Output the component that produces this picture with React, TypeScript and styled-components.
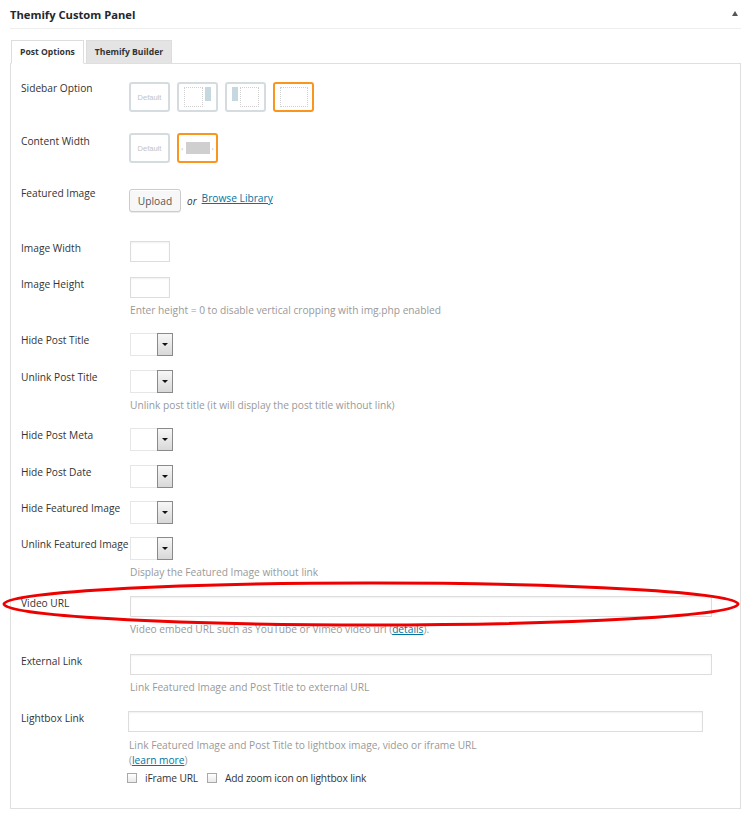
import React from "react";
import styled, { createGlobalStyle } from "styled-components";

const Global = createGlobalStyle`
  html, body { margin: 0; padding: 0; background: #fff; }
  body { font-family: "Open Sans", "DejaVu Sans", sans-serif; color: #333; }
`;

const Page = styled.div`
  position: relative;
  width: 750px;
  padding: 0 9px 0 10px;
  box-sizing: border-box;
`;

const Header = styled.div`
  display: flex;
  align-items: center;
  justify-content: space-between;
  height: 28px;
  border-bottom: 1px solid #eeeeee;
`;

const Title = styled.h2`
  margin: 0;
  font-size: 11.2px;
  font-weight: 700;
  color: #23282d;
`;

const Toggle = styled.span`
  width: 0;
  height: 0;
  margin-right: 3px;
  margin-top: -2px;
  border-left: 3px solid transparent;
  border-right: 3px solid transparent;
  border-bottom: 5px solid #555;
`;

const Tabs = styled.div`
  display: flex;
  gap: 2px;
  margin-top: 11px;
  padding-left: 1px;
  position: relative;
  z-index: 1;
`;

const Tab = styled.div<{ $active?: boolean }>`
  box-sizing: border-box;
  height: ${(p) => (p.$active ? 24 : 23)}px;
  margin-bottom: ${(p) => (p.$active ? -1 : 0)}px;
  padding: 0 8px;
  display: flex;
  align-items: center;
  font-size: 8.6px;
  font-weight: 700;
  color: #333;
  border: 1px solid #dddddd;
  border-bottom: ${(p) => (p.$active ? "1px solid #fff" : "none")};
  background: ${(p) => (p.$active ? "#fff" : "#e4e4e4")};
`;

const Box = styled.div`
  border: 1px solid #dfdfdf;
  padding: 18px 0 23px 10px;
  display: flex;
  flex-direction: column;
`;

const Row = styled.div<{ $top?: number }>`
  display: grid;
  grid-template-columns: 108px 1fr;
  margin-top: ${(p) => p.$top ?? 0}px;
`;

const Label = styled.div<{ $lift?: number }>`
  font-size: 10.2px;
  line-height: 16px;
  margin-top: ${(p) => -1 - (p.$lift ?? 0)}px;
  color: #333;
  white-space: nowrap;
`;

const Control = styled.div<{ $shift?: number }>`
  display: flex;
  flex-direction: column;
  align-items: flex-start;
  margin-left: ${(p) => p.$shift ?? 0}px;
`;

const Options = styled.div`
  display: flex;
  gap: 7px;
`;

const OptBox = styled.div<{ $selected?: boolean }>`
  box-sizing: border-box;
  width: 41px;
  height: 30px;
  border: 2px solid ${(p) => (p.$selected ? "#f8961f" : "#d5dcdf")};
  border-radius: 3px;
  display: flex;
  align-items: center;
  justify-content: center;
  gap: 2px;
  background: #fff;
`;

const DefaultText = styled.span`
  font-family: "Liberation Sans", Arial, sans-serif;
  font-size: 7.5px;
  color: #c3c3c3;
`;

const Dotted = styled.span<{ $w: number }>`
  box-sizing: border-box;
  width: ${(p) => p.$w}px;
  height: 20px;
  border: 1px dotted #d0d0d0;
`;

const Bar = styled.span`
  width: 6px;
  height: 14px;
  align-self: flex-start;
  margin-top: 3px;
  background: #c6d8df;
`;

const Chevron = styled.span`
  font-family: "DejaVu Sans", sans-serif;
  font-size: 6px;
  color: #999;
`;

const GrayBlock = styled.span`
  width: 24px;
  height: 12px;
  background: #cfcfcf;
`;

const Inline = styled.div`
  display: flex;
  align-items: center;
  gap: 5px;
`;

const Button = styled.button`
  box-sizing: border-box;
  width: 52px;
  height: 23px;
  padding: 0;
  border: 1px solid #cccccc;
  border-radius: 3px;
  background: #f7f7f7;
  box-shadow: inset 0 1px 0 #fff, 0 1px 0 rgba(0, 0, 0, 0.08);
  font-family: inherit;
  font-size: 10.2px;
  color: #555;
`;

const Or = styled.em`
  font-size: 10px;
  color: #333;
  margin-left: 1px;
`;

const Link = styled.a`
  font-size: 10.2px;
  color: #0074a2;
  text-decoration: underline;
  margin-top: -6px;
`;

const TextInput = styled.div<{ $w: number }>`
  box-sizing: border-box;
  width: ${(p) => p.$w}px;
  height: 21px;
  margin-left: 1px;
  border: 1px solid #dddddd;
  background: #fff;
  box-shadow: inset 0 1px 2px rgba(0, 0, 0, 0.06);
`;

const Select = styled.div`
  display: flex;
  width: 43px;
  height: 23px;
  margin-left: 1px;
`;

const SelectField = styled.div`
  flex: 1;
  border: 1px solid #e6e6e6;
  border-right: none;
  background: #fff;
`;

const SelectBtn = styled.div`
  box-sizing: border-box;
  width: 16px;
  border: 1px solid #8a8a8a;
  background: linear-gradient(#f7f7f7, #d8d8d8);
  display: flex;
  align-items: center;
  justify-content: center;
  &::after {
    content: "";
    border-left: 3px solid transparent;
    border-right: 3px solid transparent;
    border-top: 3px solid #111;
  }
`;

const Help = styled.div<{ $top?: number; $indent?: number }>`
  font-size: 10.2px;
  line-height: 14px;
  color: #999;
  margin-top: ${(p) => p.$top ?? 5}px;
  margin-left: ${(p) => p.$indent ?? 0}px;
  white-space: nowrap;
`;

const HelpLink = styled.a`
  color: #0074a2;
  text-decoration: underline;
`;

const Checks = styled.div`
  display: flex;
  align-items: center;
  margin-top: 4px;
  font-size: 10.2px;
  line-height: 14px;
  color: #333;
  letter-spacing: -0.15px;
`;

const Check = styled.span`
  box-sizing: border-box;
  width: 10px;
  height: 10px;
  margin-right: 8px;
  border: 1px solid #a8a8a8;
  background: linear-gradient(#fff, #e9e9e9);
`;

const CheckLabel = styled.span`
  margin-right: 9px;
`;

const Annotation = styled.svg`
  position: absolute;
  left: 0;
  top: 580px;
  width: 750px;
  height: 52px;
  pointer-events: none;
`;

const Sel = () => (
  <Select>
    <SelectField />
    <SelectBtn />
  </Select>
);

export default function App() {
  return (
    <>
      <Global />
      <Page>
        <Header>
          <Title>Themify Custom Panel</Title>
          <Toggle />
        </Header>
        <Tabs>
          <Tab $active>Post Options</Tab>
          <Tab>Themify Builder</Tab>
        </Tabs>
        <Box>
          <Row>
            <Label $lift={1}>Sidebar Option</Label>
            <Control>
              <Options>
                <OptBox>
                  <DefaultText>Default</DefaultText>
                </OptBox>
                <OptBox>
                  <Dotted $w={19} />
                  <Bar />
                </OptBox>
                <OptBox>
                  <Bar />
                  <Dotted $w={19} />
                </OptBox>
                <OptBox $selected>
                  <Dotted $w={28} />
                </OptBox>
              </Options>
            </Control>
          </Row>
          <Row $top={21}>
            <Label $lift={-1}>Content Width</Label>
            <Control>
              <Options>
                <OptBox>
                  <DefaultText>Default</DefaultText>
                </OptBox>
                <OptBox $selected>
                  <Chevron>‹</Chevron>
                  <GrayBlock />
                  <Chevron>›</Chevron>
                </OptBox>
              </Options>
            </Control>
          </Row>
          <Row $top={26}>
            <Label $lift={3}>Featured Image</Label>
            <Control>
              <Inline>
                <Button>Upload</Button>
                <Or>or</Or>
                <Link>Browse Library</Link>
              </Inline>
            </Control>
          </Row>
          <Row $top={29}>
            <Label>Image Width</Label>
            <Control>
              <TextInput $w={40} />
            </Control>
          </Row>
          <Row $top={15}>
            <Label>Image Height</Label>
            <Control>
              <TextInput $w={40} />
              <Help $indent={1}>Enter height = 0 to disable vertical cropping with img.php enabled</Help>
            </Control>
          </Row>
          <Row $top={16}>
            <Label>Hide Post Title</Label>
            <Control>
              <Sel />
            </Control>
          </Row>
          <Row $top={14}>
            <Label>Unlink Post Title</Label>
            <Control>
              <Sel />
              <Help $indent={1}>Unlink post title (it will display the post title without link)</Help>
            </Control>
          </Row>
          <Row $top={16}>
            <Label>Hide Post Meta</Label>
            <Control>
              <Sel />
            </Control>
          </Row>
          <Row $top={14}>
            <Label>Hide Post Date</Label>
            <Control>
              <Sel />
            </Control>
          </Row>
          <Row $top={13}>
            <Label>Hide Featured Image</Label>
            <Control>
              <Sel />
            </Control>
          </Row>
          <Row $top={13}>
            <Label>Unlink Featured Image</Label>
            <Control>
              <Sel />
              <Help $indent={1}>Display the Featured Image without link</Help>
            </Control>
          </Row>
          <Row $top={17}>
            <Label>Video URL</Label>
            <Control>
              <TextInput $w={582} />
              <Help $indent={1}>
                Video embed URL such as YouTube or Vimeo video url (<HelpLink>details</HelpLink>).
              </Help>
            </Control>
          </Row>
          <Row $top={18}>
            <Label>External Link</Label>
            <Control>
              <TextInput $w={582} />
              <Help $indent={1}>Link Featured Image and Post Title to external URL</Help>
            </Control>
          </Row>
          <Row $top={17}>
            <Label>Lightbox Link</Label>
            <Control $shift={-2}>
              <TextInput $w={575} />
              <Help $top={6} $indent={2}>
                Link Featured Image and Post Title to lightbox image, video or iframe URL
              </Help>
              <Help $top={1} $indent={2}>
                (<HelpLink>learn more</HelpLink>)
              </Help>
              <Checks>
                <Check />
                <CheckLabel>iFrame URL</CheckLabel>
                <Check />
                <span>Add zoom icon on lightbox link</span>
              </Checks>
            </Control>
          </Row>
        </Box>
        <Annotation viewBox="0 0 750 52">
          <ellipse cx="371" cy="24" rx="367" ry="21" fill="none" stroke="#ee0000" strokeWidth="3" />
        </Annotation>
      </Page>
    </>
  );
}
